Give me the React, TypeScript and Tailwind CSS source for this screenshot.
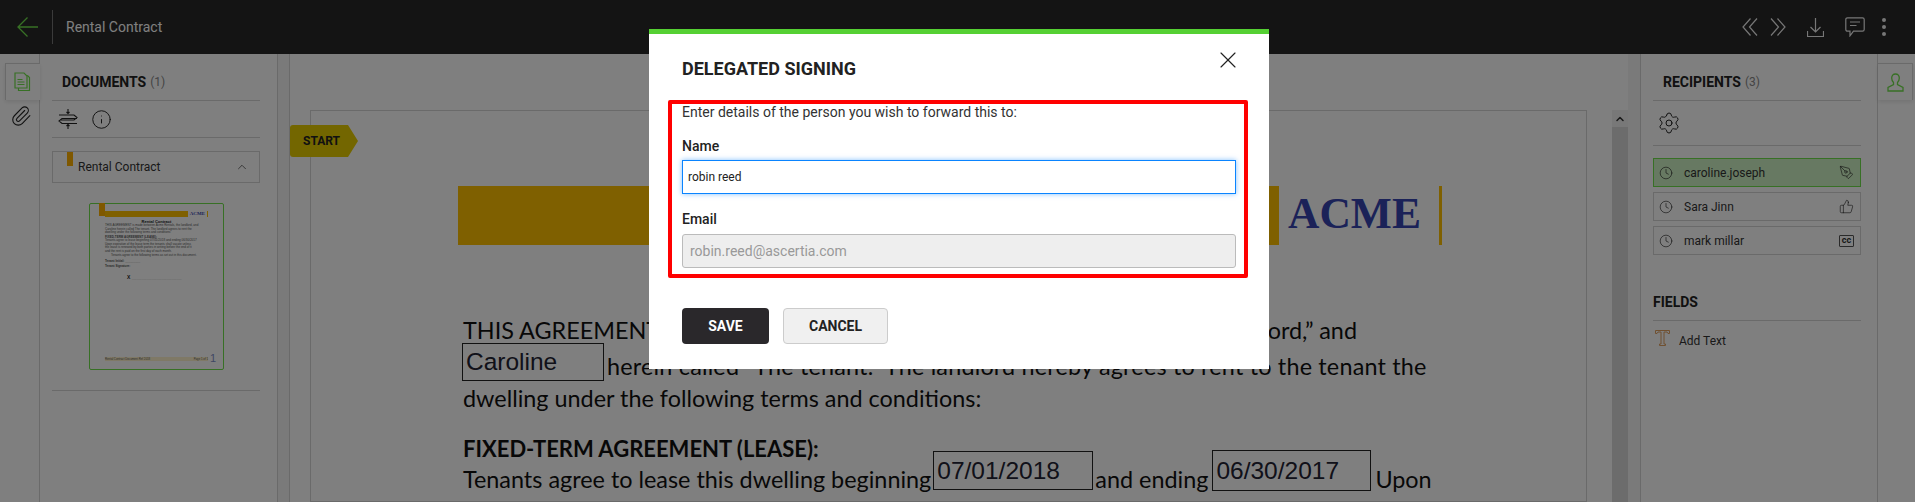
import { ChevronUp, Clock, Info, Paperclip, PenTool, Settings, ThumbsUp, X } from 'lucide-react';
import type { ReactNode } from 'react';

function DocsIcon() {
  return (
    <svg width="18" height="20" viewBox="0 0 18 20" fill="none" stroke="#6fe04a" strokeWidth="1.2">
      <path d="M1 1h9l3 3v12H1z" />
      <path d="M13 3.5l1 .5 1.5 1.5V18.5H4.5V16" />
      <path d="M3.5 7.5h5M3.5 10h7M3.5 12.5h7" />
    </svg>
  );
}

function SplitIcon() {
  return (
    <svg width="20" height="20" viewBox="0 0 20 20" fill="none" stroke="#222" strokeWidth="1.1">
      <path d="M10 0v4M8.5 3l1.5 1.5L11.500 3M10 20v-4M8.500 17l1.500-1.500 1.500 1.500" />
      <path d="M1 6h15l3 2.500-3 2.500H3" />
      <path d="M19 9.500H4l-3 2.500 3 2.500h15" />
    </svg>
  );
}

function UserIcon() {
  return (
    <svg width="17" height="19" viewBox="0 0 17 19" fill="none" stroke="#6fe04a" strokeWidth="1.3">
      <path d="M8.500 1c-2.500 0-3.800 1.800-3.800 4 0 2 .8 3.500 1.800 4.500v2L1 14.500V18h15v-3.500l-5.500-3v-2c1-1 1.800-2.500 1.800-4.500 0-2.200-1.300-4-3.800-4z" />
    </svg>
  );
}

function AddTextIcon() {
  return (
    <svg width="15" height="16" viewBox="0 0 15 16" fill="none" stroke="#e0a060" strokeWidth="1">
      <path d="M.5.500h14v3h-1.500l-1-1.500H9v12h1.500v1.500h-6V14H6V2H3L2 3.500H.5z" />
    </svg>
  );
}

function TopBar() {
  return (
    <div className="flex h-[54px] shrink-0 items-center bg-[#282828] pl-[17px] pr-[29px]">
      <svg width="21" height="20" viewBox="0 0 21 20" fill="none" stroke="#6fe04a" strokeWidth="1.300">
        <path d="M21 10H1M10.500.500 1 10l9.500 9.500" />
      </svg>
      <div className="ml-[14px] h-[34px] w-px bg-[#777]" />
      <span className="ml-[13px] text-[14px] text-white">Rental Contract</span>
      <div className="ml-auto flex items-center text-[#eee]">
        <svg width="16" height="18" viewBox="0 0 16 18" fill="none" stroke="currentColor" strokeWidth="1.200">
          <path d="M8.500.500 1 9l7.500 8.500M15 .500 7.500 9l7.500 8.500" />
        </svg>
        <svg className="ml-[12px]" width="16" height="18" viewBox="0 0 16 18" fill="none" stroke="currentColor" strokeWidth="1.200">
          <path d="M1 .500 8.500 9 1 17.500M7.500.500 15 9l-7.500 8.500" />
        </svg>
        <svg className="ml-[21px]" width="17" height="19" viewBox="0 0 17 19" fill="none" stroke="currentColor" strokeWidth="1.200">
          <path d="M8.500 0v14M3.500 9l5 5 5-5M.5 13v5.500h16V13" />
        </svg>
        <svg className="ml-[21px]" width="20" height="20" viewBox="0 0 20 20" fill="none" stroke="currentColor" strokeWidth="1.200">
          <path d="M2.500.800h15c1 0 1.700.700 1.700 1.700v10c0 1-.7 1.700-1.700 1.700H8.500L5 18.800v-4.600H2.500c-1 0-1.700-.7-1.700-1.700v-10c0-1 .7-1.700 1.700-1.700z" />
          <path d="M5 5h10M5 8.500h6.500" />
        </svg>
        <div className="ml-[17px] flex flex-col gap-[3px]">
          <span className="h-[4px] w-[4px] rounded-full bg-[#eee]" />
          <span className="h-[4px] w-[4px] rounded-full bg-[#eee]" />
          <span className="h-[4px] w-[4px] rounded-full bg-[#eee]" />
        </div>
      </div>
    </div>
  );
}

function PanelHeading({ title, count }: { title: string; count?: string }) {
  return (
    <div className="flex h-[47px] items-end border-b border-[#d5d5d5] pb-[9px] pl-[10px]">
      <span className="text-[14px] leading-[18px] font-bold text-[#222]">{title}</span>
      {count && <span className="ml-[4px] text-[12px] leading-[18px] text-[#888]">{count}</span>}
    </div>
  );
}

function ThumbLine({ children, className }: { children: ReactNode; className?: string }) {
  return <p className={`whitespace-nowrap ${className ?? ''}`}>{children}</p>;
}

function Thumbnail() {
  return (
    <div className="relative mt-[20px] ml-[37px] flex h-[167px] w-[135px] flex-col rounded-[2px] border border-[#6fe04a] bg-white pr-[15px] pb-[8px] pl-[15px] font-['Liberation_Sans',sans-serif] text-[3px] leading-[3.500px] text-[#555]">
      <div className="absolute top-[-1px] left-[9px] h-[13px] w-[6px] bg-[#ffb000]" />
      <div className="mt-[7px] flex items-center">
        <div className="h-[6px] w-[84px] bg-[#ffc000]" />
        <span className="ml-[2px] font-['Liberation_Serif',serif] text-[5px] leading-[6px] font-bold text-[#3644b0]">ACME</span>
        <div className="ml-[2px] h-[6px] w-px bg-[#ffc000]" />
      </div>
      <p className="mt-[1.500px] text-center text-[4px] leading-[5px] font-bold text-[#222]">Rental Contract</p>
      <ThumbLine>THIS AGREEMENT is made between Acme Rentals, the landlord, and</ThumbLine>
      <ThumbLine className="mt-[0.500px]">Caroline herein called The tenant. The landlord agrees to rent the</ThumbLine>
      <ThumbLine>dwelling under the following terms and conditions:</ThumbLine>
      <ThumbLine className="mt-[1px] font-bold">FIXED-TERM AGREEMENT (LEASE):</ThumbLine>
      <ThumbLine>Tenants agree to lease beginning 07/01/2018 and ending 06/30/2017</ThumbLine>
      <ThumbLine>Upon expiration of the lease term the tenants shall vacate unless</ThumbLine>
      <ThumbLine>the lease is renewed by both parties in writing before the end of it</ThumbLine>
      <ThumbLine>and the rent is paid on the first day of each month.</ThumbLine>
      <ThumbLine className="mt-[0.500px] pl-[6px]">Tenants agree to the following terms as set out in this document.</ThumbLine>
      <ThumbLine className="mt-[2.500px] font-bold">Tenant Initial: <span className="font-normal text-[#aaa]">_________</span></ThumbLine>
      <ThumbLine className="mt-[1.500px] font-bold">Tenant Signature:</ThumbLine>
      <ThumbLine className="mt-[6.500px] pl-[22px] text-[5px] leading-[5px] font-bold text-[#222]">
        X <span className="text-[3px] font-normal text-[#bbb]">______________________________</span>
      </ThumbLine>
      <div className="mt-auto flex items-center justify-between bg-[#fff2cc] text-[2.800px] leading-[4px]">
        <span>Rental Contract Document Ref 2018</span>
        <span>Page 1 of 1</span>
      </div>
      <span className="absolute right-[7px] bottom-[5px] text-[11px] leading-[11px] text-[#7f90c8]">1</span>
    </div>
  );
}

function DocumentsPanel() {
  return (
    <div className="w-[238px] border-r border-[#d5d5d5] pr-[17px] pl-[12px]">
      <PanelHeading title="DOCUMENTS" count="(1)" />
      <div className="flex h-[37px] items-center gap-[13px] border-b border-[#d5d5d5] pl-[6px]">
        <SplitIcon />
        <Info size={21} strokeWidth={1.100} color="#222" />
      </div>
      <div className="relative mt-[13px] flex h-[32px] items-center border border-[#d5d5d5] pr-[10px] pl-[25px] text-[12px] text-[#333]">
        <div className="absolute top-0 left-[14px] h-[14px] w-[6px] bg-[#ffb000]" />
        <span>Rental Contract</span>
        <ChevronUp size={14} strokeWidth={1.200} className="ml-auto" />
      </div>
      <Thumbnail />
      <div className="mt-[20px] border-b border-[#d5d5d5]" />
    </div>
  );
}

function TextLine({ children, className }: { children: ReactNode; className?: string }) {
  return <div className={`flex h-[32px] items-center whitespace-nowrap ${className ?? ''}`}>{children}</div>;
}

function DocumentView() {
  const field = "border border-[#222] pl-[3px] font-['Liberation_Sans',sans-serif] text-[24.500px] text-[#223]";
  return (
    <div className="relative flex-1 pt-[56px] pr-[25px] pl-[20px]">
      <div className="absolute top-[71px] left-0 z-10 flex h-[32px] w-[68px] items-center rounded-l-[3px] bg-[#e6cc00] pl-[13px] text-[12px] font-bold text-[#222] [clip-path:polygon(0_0,58px_0,68px_50%,58px_100%,0_100%)]">
        START
      </div>
      <div className="h-[392px] overflow-hidden border border-[#d5d5d5] bg-white pl-[147px]">
        <div className="mt-[75px] flex h-[59px] items-center">
          <div className="h-full w-[821px] bg-[#ffc000]" />
          <span className="-mt-[4px] ml-[9px] w-[151px] font-['Liberation_Serif',serif] text-[43.500px] leading-none font-bold text-[#3644b0]">ACME</span>
          <div className="h-full w-[3px] bg-[#ffc000]" />
        </div>
        <div className="pl-[5px] font-['Lato',sans-serif] text-[23.400px] text-[#111]">
          <TextLine className="mt-[70px] w-[894px] justify-between">
            <span>THIS AGREEMENT is made between Acme Rentals,</span>
            <span>herein called “The landlord,” and</span>
          </TextLine>
          <TextLine className="mt-[4px]">
            <div className={`-mt-[11px] -ml-px h-[38px] w-[142px] leading-[36px] ${field}`}>Caroline</div>
            <span className="ml-[3px] tracking-[0.19px]">herein called “The tenant.” The landlord hereby agrees to rent to the tenant the</span>
          </TextLine>
          <TextLine>dwelling under the following terms and conditions:</TextLine>
          <TextLine className="mt-[17px] text-[22px] font-bold">FIXED-TERM AGREEMENT (LEASE):</TextLine>
          <TextLine>
            <span>Tenants agree to lease this dwelling beginning</span>
            <div className={`-mt-[19px] ml-[2px] h-[39px] w-[160px] leading-[37px] ${field}`}>07/01/2018</div>
            <span className="ml-[2px]">and ending</span>
            <div className={`-mt-[19px] ml-[4px] h-[41px] w-[159px] leading-[39px] ${field}`}>06/30/2017</div>
            <span className="ml-[4px]">Upon</span>
          </TextLine>
        </div>
      </div>
    </div>
  );
}

function Scrollbar() {
  return (
    <div className="mt-[56px] flex w-[16px] flex-col bg-[#d8d8d8]">
      <div className="flex h-[17px] items-center justify-center bg-[#f1f1f1]">
        <ChevronUp size={12} strokeWidth={3} color="#333" />
      </div>
    </div>
  );
}

function RecipientRow({ name, active, icon }: { name: string; active?: boolean; icon: ReactNode }) {
  return (
    <div className={`flex h-[29px] items-center border pr-[6px] pl-[5px] text-[12px] text-[#333] ${active ? 'border-[#6fe04a] bg-[#cff2c4]' : 'border-[#d5d5d5] bg-white'}`}>
      <Clock size={14} strokeWidth={1.100} color="#222" />
      <span className="ml-[11px]">{name}</span>
      <span className="ml-auto flex">{icon}</span>
    </div>
  );
}

function RecipientsPanel() {
  return (
    <div className="w-[238px] border-x border-[#d5d5d5] pr-[16px] pl-[12px]">
      <PanelHeading title="RECIPIENTS" count="(3)" />
      <div className="flex h-[45px] items-center border-b border-[#d5d5d5] pl-[4px]">
        <Settings size={24} strokeWidth={1} color="#222" />
      </div>
      <div className="mt-[12px] flex flex-col gap-[5px]">
        <RecipientRow name="caroline.joseph" active icon={<PenTool size={15} strokeWidth={1} color="#222" />} />
        <RecipientRow name="Sara Jinn" icon={<ThumbsUp size={15} strokeWidth={1} color="#222" />} />
        <RecipientRow
          name="mark millar"
          icon={<span className="flex h-[12px] w-[15px] items-center justify-center rounded-[1px] border border-[#555] text-[9px] leading-none font-bold">cc</span>}
        />
      </div>
      <div className="mt-[38px] border-b border-[#d5d5d5] pb-[9px] text-[14px] leading-[18px] font-bold text-[#222]">FIELDS</div>
      <div className="mt-[9px] flex items-start pl-[2px] text-[12px] text-[#333]">
        <AddTextIcon />
        <span className="mt-[2px] ml-[9px]">Add Text</span>
      </div>
    </div>
  );
}

function DelegateDialog() {
  return (
    <div className="absolute inset-0 z-20 flex justify-center bg-black/50 pt-[29px] pl-[3px]">
      <div className="h-[340px] w-[620px] border-t-[5px] border-[#55d033] bg-white pr-[19px] pl-[19px]">
        <div className="flex items-start justify-between pt-[25px] pr-[14px] pl-[14px]">
          <h2 className="text-[18px] leading-[20px] font-bold text-[#222]">DELEGATED SIGNING</h2>
          <X size={28} strokeWidth={1} color="#222" className="-mt-[13px] -mr-[6px]" />
        </div>
        <div className="mt-[21px] w-[580px] rounded-[2px] border-4 border-[#f00] pr-[8px] pb-[6px] pl-[10px] text-[14px] leading-[18px] text-[#333]">
          <p className="-mt-px">Enter details of the person you wish to forward this to:</p>
          <label className="mt-[16px] block font-medium text-[#222]">Name</label>
          <input
            readOnly
            value="robin reed"
            className="mt-[5px] h-[34px] w-full border border-[#0a84ff] pl-[5px] text-[12px] text-[#222] shadow-[0_0_5px_rgba(10,132,255,0.5)] outline-none"
          />
          <label className="mt-[16px] block font-medium text-[#222]">Email</label>
          <input
            readOnly
            value="robin.reed@ascertia.com"
            className="mt-[6px] h-[34px] w-full rounded-[3px] border border-[#bbb] bg-[#eee] pl-[7px] text-[14px] text-[#999] outline-none"
          />
        </div>
        <div className="mt-[30px] ml-[14px] flex gap-[14px] text-[14px] font-bold">
          <button className="h-[36px] w-[87px] rounded-[4px] bg-[#2a282b] text-white">SAVE</button>
          <button className="h-[36px] w-[105px] rounded-[4px] border border-[#ccc] bg-[#f0f0f0] text-[#222]">CANCEL</button>
        </div>
      </div>
    </div>
  );
}

export default function App() {
  return (
    <div className="relative flex h-screen flex-col overflow-hidden bg-white font-['Roboto',sans-serif]">
      <TopBar />
      <div className="flex min-h-0 flex-1">
        <div className="w-[40px] border-r border-[#d5d5d5] pt-[9px] pl-[5px]">
          <div className="relative z-10 flex h-[37px] w-[35px] items-center justify-center border-t border-l border-[#d5d5d5] bg-white shadow-[0_2px_4px_rgba(0,0,0,0.1)]">
            <DocsIcon />
          </div>
          <div className="mt-[5px] flex justify-center pr-[2px]">
            <Paperclip size={22} strokeWidth={1.200} color="#222" />
          </div>
        </div>
        <DocumentsPanel />
        <div className="w-[12px] border-r border-[#d5d5d5] bg-[#f4f4f4]" />
        <DocumentView />
        <Scrollbar />
        <div className="w-[12px] bg-[#f4f4f4]" />
        <RecipientsPanel />
        <div className="pt-[9px] pr-[2px]">
          <div className="flex h-[37px] w-[35px] items-center justify-center border-t border-r border-[#d5d5d5] bg-white shadow-[0_2px_4px_rgba(0,0,0,0.1)]">
            <UserIcon />
          </div>
        </div>
      </div>
      <DelegateDialog />
    </div>
  );
}
